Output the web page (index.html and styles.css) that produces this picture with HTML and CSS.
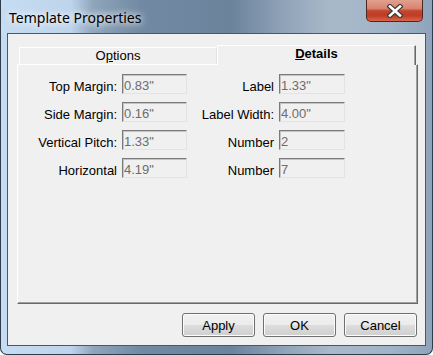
FILE: index.html
```html
<html>
<head>
    <meta charset="UTF-8">
    <title>Template Properties</title>
    <link rel="stylesheet" href="styles.css">
</head>
<body>
    <div class="window">
        <div class="titlebar">
            <span class="title">Template Properties</span>
            <div class="close">
                <svg width="16" height="14" viewBox="0 0 16 14">
                    <path d="M3 2.5 L13 11.5 M13 2.5 L3 11.5" stroke="#3b3b3b" stroke-width="5" stroke-linecap="square"/>
                    <path d="M3 2.5 L13 11.5 M13 2.5 L3 11.5" stroke="#ffffff" stroke-width="2.6" stroke-linecap="square"/>
                </svg>
            </div>
        </div>

        <div class="client">
            <div class="tabs">
                <div class="tab">O<u>p</u>tions</div>
                <div class="tab activo"><u>D</u>etails</div>
            </div>

            <div class="panel">
                <div class="campos">
                    <label class="etiqueta">Top Margin:</label>
                    <input class="valor" type="text" value='0.83"' readonly>
                    <label class="etiqueta">Label</label>
                    <input class="valor" type="text" value='1.33"' readonly>

                    <label class="etiqueta">Side Margin:</label>
                    <input class="valor" type="text" value='0.16"' readonly>
                    <label class="etiqueta">Label Width:</label>
                    <input class="valor" type="text" value='4.00"' readonly>

                    <label class="etiqueta">Vertical Pitch:</label>
                    <input class="valor" type="text" value='1.33"' readonly>
                    <label class="etiqueta">Number</label>
                    <input class="valor" type="text" value="2" readonly>

                    <label class="etiqueta">Horizontal</label>
                    <input class="valor" type="text" value='4.19"' readonly>
                    <label class="etiqueta">Number</label>
                    <input class="valor" type="text" value="7" readonly>
                </div>
            </div>

            <div class="botones">
                <button class="boton" type="button">Apply</button>
                <button class="boton" type="button">OK</button>
                <button class="boton" type="button">Cancel</button>
            </div>
        </div>
    </div>
</body>
</html>
```

FILE: styles.css
```css
body {
    margin: 0;
    background-color: white;
    font-family: "Liberation Sans", Arial, sans-serif;
}

.window {
    width: 433px;
    height: 355px;
    box-sizing: border-box;
    border: 1px solid #2e3c4c;
    border-top: none;
    border-radius: 0 0 7px 7px;
    padding: 0 6px 8px 6px;
    display: flex;
    flex-direction: column;
    background: linear-gradient(90deg, #c6dcf2 0, #bdd4ec 70px, #8fa5bc 92px, #7189a2 140px, #6c839c 230px, #8ea2b7 280px, #a9b9c9 330px, #a0b3c7 390px, #8ea3ba 433px);
}

.titlebar {
    height: 33px;
    margin: 0 -6px;
    padding-left: 8px;
    display: flex;
    align-items: flex-start;
}

.title {
    padding-top: 8px;
    font-family: "Noto Sans", "Open Sans", sans-serif;
    font-size: 14px;
    line-height: 20px;
    color: #000;
    text-shadow: 0 0 6px #ffffff, 0 0 10px #ffffff;
}

.close {
    margin-left: auto;
    margin-right: 9px;
    width: 57px;
    height: 22px;
    box-sizing: border-box;
    border: 1px solid #4e2620;
    border-top: none;
    border-radius: 0 0 5px 5px;
    background: linear-gradient(#e3a08f 0, #d88470 40%, #c3442c 52%, #c03d26 75%, #d9664d 100%);
    display: flex;
    align-items: center;
    justify-content: center;
}

.client {
    flex: 1;
    border: 1px solid #46586c;
    background-color: #f0f0f0;
    padding: 11px 7px 8px 9px;
    display: flex;
    flex-direction: column;
}

.tabs {
    height: 19px;
    display: flex;
    align-items: flex-end;
    position: relative;
    z-index: 1;
}

.tab {
    width: 198px;
    height: 17px;
    box-sizing: border-box;
    margin-left: 2px;
    border-top: 1px solid white;
    border-left: 1px solid white;
    border-right: 1px solid #e3e3e3;
    background-color: #f0f0f0;
    font-size: 13px;
    line-height: 15px;
    text-align: center;
    color: #000;
}

.activo {
    width: 199px;
    height: 20px;
    margin-left: 0;
    margin-bottom: -1px;
    border-right: 1px solid #696969;
    box-shadow: inset -1px 0 0 #a0a0a0;
    font-weight: bold;
    line-height: 16px;
}

.panel {
    flex: 1;
    border-top: 1px solid white;
    border-left: 1px solid white;
    border-right: 1px solid #696969;
    border-bottom: 1px solid #696969;
    box-shadow: inset -1px -1px 0 #a0a0a0;
    padding-top: 9px;
}

.campos {
    display: grid;
    grid-template-columns: 104px 65px 92px 66px;
    grid-auto-rows: 20px;
    row-gap: 8px;
}

.etiqueta {
    box-sizing: border-box;
    padding: 5px 5px 0 0;
    font-size: 13px;
    line-height: 15px;
    text-align: right;
    color: #000;
}

.valor {
    width: 100%;
    height: 20px;
    box-sizing: border-box;
    margin: 0;
    padding: 2px 0 0 1px;
    border: 1px solid;
    border-color: #7a7a7a #e3e3e3 #e3e3e3 #7a7a7a;
    box-shadow: inset 1px 1px 0 #c4c4c4;
    background-color: #f0f0f0;
    font-family: "Liberation Sans", Arial, sans-serif;
    font-size: 13px;
    color: #6d6d6d;
    outline: none;
}

.botones {
    margin-top: 9px;
    display: flex;
    justify-content: flex-end;
    gap: 8px;
    padding-right: 1px;
}

.boton {
    width: 73px;
    height: 24px;
    margin: 0;
    border: 1px solid #707070;
    border-radius: 3px;
    background: linear-gradient(#f2f2f2 0, #ebebeb 50%, #dddddd 51%, #cfcfcf 100%);
    box-shadow: inset 0 0 0 1px #fcfcfc;
    font-family: "Liberation Sans", Arial, sans-serif;
    font-size: 13px;
    color: #000;
    padding: 0;
}
```
